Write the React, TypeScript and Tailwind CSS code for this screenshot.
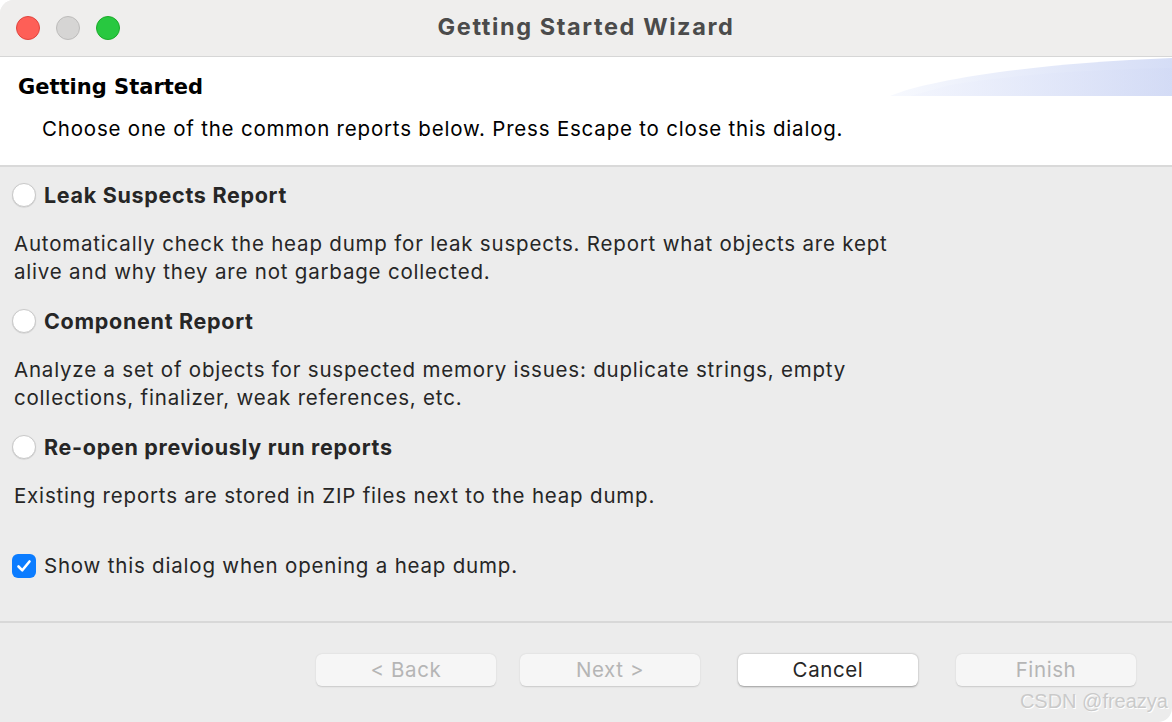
import React from "react";

const sys = { fontFamily: "Inter, 'Noto Sans', sans-serif" };

function Radio() {
  return (
    <span className="inline-block w-[24px] h-[24px] rounded-full bg-white border border-[#c9c9c9] shadow-[0_0.5px_1px_rgba(0,0,0,0.15)] shrink-0" />
  );
}

function Option({ title, lines }: { title: string; lines: string[] }) {
  return (
    <div>
      <div className="flex items-center gap-[8px] pl-[12px] h-[36px]">
        <Radio />
        <span className="text-[21.5px] font-bold text-[#262626] tracking-[0.7px]">{title}</span>
      </div>
      <div className="pl-[14px] pt-[17px] text-[20.5px] leading-[28px] tracking-[0.8px] text-[#262626]">
        {lines.map((l) => (
          <div key={l}>{l}</div>
        ))}
      </div>
    </div>
  );
}

function Btn({ label, enabled }: { label: string; enabled?: boolean }) {
  return (
    <button
      className={
        "w-[180px] h-[32px] rounded-[6px] text-[20.5px] tracking-[0.6px] " +
        (enabled
          ? "bg-white text-[#262626] shadow-[0_0.5px_2px_rgba(0,0,0,0.35)]"
          : "bg-[#f6f6f6] text-[#b5b5b5] shadow-[0_0.5px_1.5px_rgba(0,0,0,0.15)]")
      }
    >
      {label}
    </button>
  );
}

export default function App() {
  return (
    <div className="w-[1172px] h-[722px] overflow-hidden bg-[#ececec] flex flex-col relative rounded-tl-[14px] rounded-br-[14px]" style={sys}>
      {/* Title bar */}
      <div className="h-[57px] shrink-0 bg-[#efeeed] border-b border-[#d6d6d6] flex items-center relative">
        <div className="flex items-center gap-[16px] pl-[16px]">
          <span className="w-[24px] h-[24px] rounded-full bg-[#fe5f57] border border-[#e0443e]" />
          <span className="w-[24px] h-[24px] rounded-full bg-[#d6d5d4] border border-[#bdbcbb]" />
          <span className="w-[24px] h-[24px] rounded-full bg-[#28c840] border border-[#1aab29]" />
        </div>
        <div className="absolute inset-0 flex items-center justify-center pointer-events-none">
          <span className="text-[23.5px] font-bold text-[#4b4b4b] tracking-[1.6px] pb-[2px]">Getting Started Wizard</span>
        </div>
      </div>

      {/* Header */}
      <div className="h-[110px] shrink-0 bg-white border-b-[2px] border-[#d9d9d9] relative">
        <svg className="absolute right-0 top-0" width="282" height="40" viewBox="0 0 282 40">
          <defs>
            <linearGradient id="g1" x1="0" x2="1" y1="0" y2="0">
              <stop offset="0" stopColor="#f7f9fe" />
              <stop offset="1" stopColor="#d5ddf6" />
            </linearGradient>
            <linearGradient id="g2" x1="0" x2="1" y1="0" y2="0">
              <stop offset="0" stopColor="#f1f4fd" />
              <stop offset="1" stopColor="#d2daf5" />
            </linearGradient>
          </defs>
          <path d="M0 39 C 40 22, 150 6, 282 1 L282 39 Z" fill="url(#g1)" />
          <path d="M60 28 C 120 18, 200 12, 282 11 L282 39 L20 39 Z" fill="url(#g2)" opacity="0.6" />
        </svg>
        <div className="pl-[18px] pt-[15px] text-[21px] font-bold text-black leading-[30px] relative" style={{ fontFamily: "'DejaVu Sans', sans-serif" }}>
          Getting Started
        </div>
        <div className="pl-[42px] pt-[13px] text-[20.5px] tracking-[0.8px] text-black leading-[28px] relative">
          Choose one of the common reports below. Press Escape to close this dialog.
        </div>
      </div>

      {/* Body */}
      <div className="flex-1 flex flex-col pt-[10px] gap-[17px]">
        <Option
          title="Leak Suspects Report"
          lines={[
            "Automatically check the heap dump for leak suspects. Report what objects are kept",
            "alive and why they are not garbage collected.",
          ]}
        />
        <Option
          title="Component Report"
          lines={[
            "Analyze a set of objects for suspected memory issues: duplicate strings, empty",
            "collections, finalizer, weak references, etc.",
          ]}
        />
        <Option
          title="Re-open previously run reports"
          lines={["Existing reports are stored in ZIP files next to the heap dump."]}
        />
        <div className="flex items-center gap-[8px] pl-[12px] h-[36px] mt-[21px]">
          <span className="w-[24px] h-[24px] rounded-[6px] bg-[#0b7cff] flex items-center justify-center">
            <svg width="16" height="16" viewBox="0 0 16 16">
              <path d="M2.5 8.5 L6.3 12.3 L13.5 3.5" fill="none" stroke="white" strokeWidth="2.6" strokeLinecap="round" strokeLinejoin="round" />
            </svg>
          </span>
          <span className="text-[20.5px] tracking-[0.8px] text-[#262626]">Show this dialog when opening a heap dump.</span>
        </div>
      </div>

      {/* Footer */}
      <div className="h-[101px] shrink-0 border-t-[2px] border-[#d8d8d8] flex items-start justify-end pr-[36px] pt-[31px] gap-[38px]">
        <div className="flex gap-[24px]">
          <Btn label="< Back" />
          <Btn label="Next >" />
        </div>
        <Btn label="Cancel" enabled />
        <Btn label="Finish" />
      </div>

      <div className="absolute right-[4px] bottom-[6px] text-[20px] text-[#cacaca] [text-shadow:1px_1px_0_#ffffff]" style={{ fontFamily: "'Liberation Sans', sans-serif" }}>
        CSDN @freazya
      </div>
    </div>
  );
}
